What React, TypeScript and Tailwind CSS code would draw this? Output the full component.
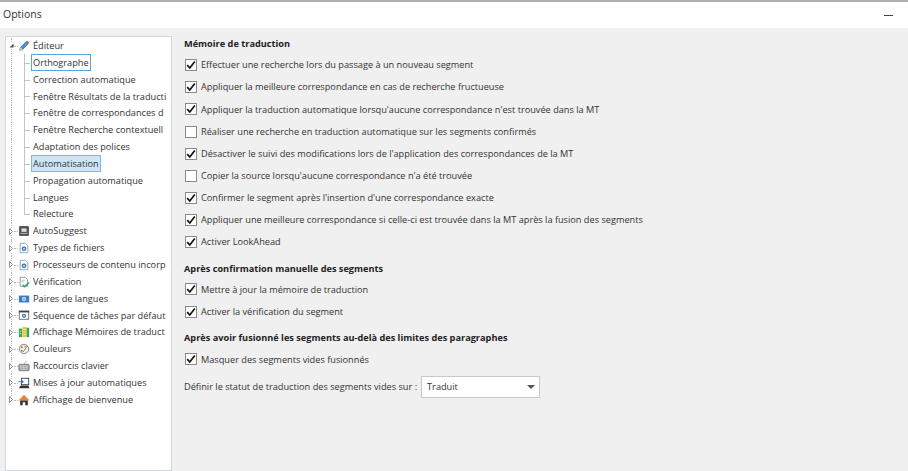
const FONT = "font-['Open_Sans','Noto_Sans',sans-serif]";

type IconName =
  | "pencil"
  | "suggest"
  | "gearDoc"
  | "check"
  | "pairs"
  | "window"
  | "memory"
  | "palette"
  | "keyboard"
  | "update"
  | "home";

function TreeIcon({ name }: { name: IconName }) {
  return (
    <svg width="12" height="12" viewBox="0 0 14 14" className="shrink-0">
      {name === "pencil" && (
        <>
          <path d="M2 12l1-3.500L9.500 2 12 4.500 5.500 11z" fill="#4a90d0" stroke="#2c5f96" strokeWidth="0.8" />
          <path d="M9.500 2L11 .8 13 3l-1 1.500z" fill="#d05050" />
          <path d="M2 12l1-3.500 2.500 2.500z" fill="#e8d2a8" />
        </>
      )}
      {name === "suggest" && (
        <>
          <rect x="2" y="2" width="10" height="10" fill="#555" stroke="#333" />
          <rect x="4" y="4" width="6" height="4" fill="#ddd" />
          <rect x="3" y="9.500" width="8" height="1" fill="#bbb" />
        </>
      )}
      {name === "gearDoc" && (
        <>
          <path d="M2.500 1.500h6l3 3v8h-9z" fill="#fff" stroke="#8a9aa8" />
          <circle cx="7" cy="8" r="2.800" fill="#3d7cc0" />
          <circle cx="7" cy="8" r="1" fill="#fff" />
        </>
      )}
      {name === "check" && (
        <>
          <path d="M2.500 1.500h6l2.500 2.500v8h-8.500z" fill="#fff" stroke="#888" />
          <path d="M4 5h4M4 7h3" stroke="#aaa" strokeWidth="0.8" />
          <path d="M5.500 10l2 2.500L13 7.500" fill="none" stroke="#2a9d58" strokeWidth="1.500" />
        </>
      )}
      {name === "pairs" && (
        <>
          <rect x="1" y="3" width="12" height="8" fill="#3d7cc0" />
          <rect x="5" y="5" width="4" height="4" fill="#e8f0fa" />
          <circle cx="7" cy="7" r="1" fill="#3d7cc0" />
        </>
      )}
      {name === "window" && (
        <>
          <rect x="1.500" y="2.500" width="11" height="9.500" fill="#fff" stroke="#666" />
          <rect x="1" y="2" width="12" height="2" fill="#444" />
          <circle cx="7" cy="8" r="2.500" fill="#3d7cc0" />
          <circle cx="7" cy="8" r="0.900" fill="#fff" />
        </>
      )}
      {name === "memory" && (
        <>
          <rect x="1" y="3" width="4" height="10" fill="#3aa655" />
          <rect x="5.500" y="1" width="4" height="12" fill="#f0c030" />
          <rect x="10" y="2" width="3" height="11" fill="#3aa655" />
          <path d="M2 6h2M2 9h2M6.500 4h2M6.500 7h2M6.500 10h2" stroke="#fff" strokeWidth="0.800" />
        </>
      )}
      {name === "palette" && (
        <>
          <circle cx="7" cy="7" r="5.500" fill="#f2f0ea" stroke="#777" />
          <circle cx="4.500" cy="5" r="1.100" fill="#d9534f" />
          <circle cx="8.500" cy="4" r="1.100" fill="#e0a030" />
          <circle cx="4.500" cy="9" r="1.100" fill="#3aa655" />
          <path d="M6 10.500L11 3.500" stroke="#777" strokeWidth="1" />
        </>
      )}
      {name === "keyboard" && (
        <>
          <path d="M9 1.500C9 4 7 3 7 5" fill="none" stroke="#999" />
          <rect x="1" y="5" width="12" height="7.500" rx="1" fill="#a8a8a8" stroke="#777" />
          <path d="M2.500 7h9M2.500 9h9M4 11h6" stroke="#eee" strokeWidth="0.900" strokeDasharray="1 .7" />
        </>
      )}
      {name === "update" && (
        <>
          <rect x="4" y="1.500" width="8.500" height="7.500" fill="#fff" stroke="#333" />
          <path d="M1 13l2-3h9l1.500 3z" fill="#333" />
          <path d="M0.500 5.500h5M3.500 3.500l2.500 2-2.500 2" fill="none" stroke="#2f7fd0" strokeWidth="1.300" />
        </>
      )}
      {name === "home" && (
        <>
          <path d="M7 1L0.500 7.500h13z" fill="#e8843a" />
          <path d="M2.500 7.500h9V13h-3V9.500h-3V13h-3z" fill="#333" />
        </>
      )}
    </svg>
  );
}

const children: { label: string; selected?: boolean; focused?: boolean }[] = [
  { label: "Orthographe", focused: true },
  { label: "Correction automatique" },
  { label: "Fenêtre Résultats de la traducti" },
  { label: "Fenêtre de correspondances d" },
  { label: "Fenêtre Recherche contextuell" },
  { label: "Adaptation des polices" },
  { label: "Automatisation", selected: true },
  { label: "Propagation automatique" },
  { label: "Langues" },
  { label: "Relecture" },
];

const roots: { label: string; icon: IconName }[] = [
  { label: "AutoSuggest", icon: "suggest" },
  { label: "Types de fichiers", icon: "gearDoc" },
  { label: "Processeurs de contenu incorp", icon: "gearDoc" },
  { label: "Vérification", icon: "check" },
  { label: "Paires de langues", icon: "pairs" },
  { label: "Séquence de tâches par défaut", icon: "window" },
  { label: "Affichage Mémoires de traduct", icon: "memory" },
  { label: "Couleurs", icon: "palette" },
  { label: "Raccourcis clavier", icon: "keyboard" },
  { label: "Mises à jour automatiques", icon: "update" },
  { label: "Affichage de bienvenue", icon: "home" },
];

function RootRow({ label, icon, expanded, last }: { label: string; icon: IconName; expanded?: boolean; last?: boolean }) {
  return (
    <div className="relative flex h-[16.85px] items-center whitespace-nowrap">
      {/* dotted tree lines */}
      <span className={`absolute left-[2px] top-0 border-l border-dotted border-[#bbb] ${last ? "h-1/2" : "h-full"}`} />
      <span className="absolute left-[5px] top-1/2 w-[4px] border-t border-dotted border-[#bbb]" />
      <span className="absolute left-0 top-[5px] bg-white">
        {expanded ? (
          <svg width="5" height="5" viewBox="0 0 6 6" className="block">
            <path d="M5.500 0.500V5.500H0.500z" fill="#555" />
          </svg>
        ) : (
          <svg width="4" height="7" viewBox="0 0 4 7" className="block">
            <path d="M0.500 0.500L3.500 3.500 0.500 6.500z" fill="#fff" stroke="#777" strokeWidth="0.800" />
          </svg>
        )}
      </span>
      <span className="ml-[9px]">
        <TreeIcon name={icon} />
      </span>
      <span className="ml-[3px] text-[#333]">{label}</span>
    </div>
  );
}

function ChildRow({ label, selected, focused, last }: { label: string; selected?: boolean; focused?: boolean; last?: boolean }) {
  return (
    <div className="relative flex h-[16.85px] items-center whitespace-nowrap pl-[22px]">
      <span className="absolute left-[2px] top-0 h-full border-l border-dotted border-[#bbb]" />
      <span className={`absolute left-[15px] top-0 border-l border-[#c4c4c4] ${last ? "h-1/2" : "h-full"}`} />
      <span className="absolute left-[15px] top-1/2 w-[6px] border-t border-[#c4c4c4]" />
      <span
        className={`flex h-[17px] items-center border px-[1px] text-[#333] ${
          selected ? "border-[#7db8e8] bg-[#cde6f7]" : focused ? "border-[#5aa5e0] bg-white" : "border-transparent"
        }`}
      >
        {label}
      </span>
    </div>
  );
}

function Check({ label, checked = true }: { label: string; checked?: boolean }) {
  return (
    <div className="flex h-[22.100px] items-center whitespace-nowrap pl-[1px]">
      <span className="flex h-[12px] w-[12px] shrink-0 items-center justify-center border border-[#8a8a8a] bg-white">
        {checked && (
          <svg width="10" height="10" viewBox="0 0 10 10">
            <path d="M1.200 5.200L3.800 8 8.800 1.500" fill="none" stroke="#111" strokeWidth="1.700" />
          </svg>
        )}
      </span>
      <span className="ml-[4px] text-[#333]">{label}</span>
    </div>
  );
}

function Heading({ children, className = "" }: { children: string; className?: string }) {
  return <div className={`whitespace-nowrap font-bold text-[#222] ${className}`}>{children}</div>;
}

export default function App() {
  return (
    <div className={`flex h-[471px] w-[908px] flex-col overflow-hidden bg-[#f0f0f0] text-[9.2px] ${FONT}`}>
      <div className="h-[2px] bg-[#b0b0b0]" />
      <div className="flex h-[26px] shrink-0 items-center justify-between bg-white pl-[3px] pr-[15px]">
        <span className="text-[10.5px] text-[#333]">Options</span>
        <span className="h-[1px] w-[9px] bg-[#444]" />
      </div>
      <div className="flex min-h-0 flex-1 pt-[8px]">
        <div className="ml-[5px] w-[167px] shrink-0 overflow-hidden border border-[#d0d7de] bg-white pl-[3px] pt-[0.5px]">
          <RootRow label="Éditeur" icon="pencil" expanded />
          {children.map((c, i) => (
            <ChildRow key={c.label} {...c} last={i === children.length - 1} />
          ))}
          {roots.map((r, i) => (
            <RootRow key={r.label} {...r} last={i === roots.length - 1} />
          ))}
        </div>
        <div className="ml-[12px] min-w-0 flex-1 pt-[1px]">
          <Heading className="mb-[3.4px]">Mémoire de traduction</Heading>
          <Check label="Effectuer une recherche lors du passage à un nouveau segment" />
          <Check label="Appliquer la meilleure correspondance en cas de recherche fructueuse" />
          <Check label="Appliquer la traduction automatique lorsqu'aucune correspondance n'est trouvée dans la MT" />
          <Check label="Réaliser une recherche en traduction automatique sur les segments confirmés" checked={false} />
          <Check label="Désactiver le suivi des modifications lors de l'application des correspondances de la MT" />
          <Check label="Copier la source lorsqu'aucune correspondance n'a été trouvée" checked={false} />
          <Check label="Confirmer le segment après l'insertion d'une correspondance exacte" />
          <Check label="Appliquer une meilleure correspondance si celle-ci est trouvée dans la MT après la fusion des segments" />
          <Check label="Activer LookAhead" />
          <Heading className="mb-[3px] mt-[8.6px]">Après confirmation manuelle des segments</Heading>
          <Check label="Mettre à jour la mémoire de traduction" />
          <Check label="Activer la vérification du segment" />
          <Heading className="mb-[4px] mt-[8px]">Après avoir fusionné les segments au-delà des limites des paragraphes</Heading>
          <Check label="Masquer des segments vides fusionnés" />
          <div className="mt-[5px] flex items-center whitespace-nowrap text-[#333]">
            <span>Définir le statut de traduction des segments vides sur :</span>
            <div className="ml-[4px] flex h-[22px] w-[119px] items-center justify-between border border-[#c8c8c8] bg-white pl-[5px] pr-[4px]">
              <span>Traduit</span>
              <svg width="8" height="4" viewBox="0 0 8 4">
                <path d="M0 0h8L4 4z" fill="#555" />
              </svg>
            </div>
          </div>
        </div>
      </div>
    </div>
  );
}
